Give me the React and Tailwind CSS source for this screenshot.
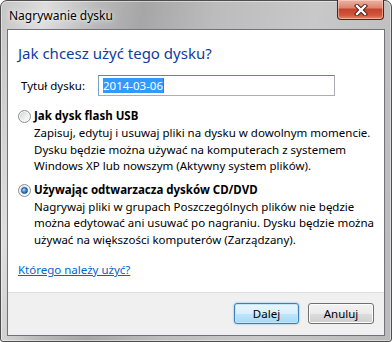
import React from 'react'

const ui = "font-['Segoe_UI','Noto_Sans',sans-serif]"

function Radio({ checked }) {
  return (
    <span className="flex h-[13px] w-[13px] shrink-0 items-center justify-center rounded-full border border-[#8c8e91] bg-[linear-gradient(135deg,#cfd0d2,#f4f4f4_70%,#ffffff)] shadow-[inset_0_0_0_1px_#f8f8f8]">
      {checked && (
        <span className="h-[7px] w-[7px] rounded-full border border-[#1d4a86] bg-[radial-gradient(circle_at_35%_35%,#b7e2ff,#3e8ee0_45%,#144c9b)]" />
      )}
    </span>
  )
}

function Option({ checked, title, lines }) {
  return (
    <div className="flex items-start gap-[3px]">
      <div className="pt-[2px]">
        <Radio checked={checked} />
      </div>
      <div className="text-[11.5px] leading-[16.5px] text-black">
        <div className="mb-[0.5px] font-bold">{title}</div>
        {lines.map((l) => (
          <div key={l} className="whitespace-nowrap">{l}</div>
        ))}
      </div>
    </div>
  )
}

function Button({ children, primary }) {
  return (
    <button
      className={`h-[21px] rounded-[3px] border text-[11.5px] leading-none text-black ${
        primary
          ? 'w-[65px] border-[#3c7fb1] bg-[linear-gradient(#eaf6fd,#d9f0fc_50%,#bee6fd_51%,#a7d9f5)] shadow-[inset_0_0_0_1px_#c0e7fb,0_0_2px_#5fb3ea]'
          : 'w-[66px] border-[#707070] bg-[linear-gradient(#f2f2f2,#ebebeb_50%,#dddddd_51%,#cfcfcf)] shadow-[inset_0_0_0_1px_#fcfcfc]'
      }`}
    >
      {children}
    </button>
  )
}

export default function App() {
  return (
    <div className={`h-[342px] w-[392px] bg-white ${ui}`}>
      <div className="relative flex h-[342px] w-[392px] flex-col rounded-t-[7px] rounded-b-[3px] border border-[#4e4e4e] bg-[linear-gradient(100deg,#c4c4c4_0%,#dedede_10%,#b8b8b8_22%,#a6a6a6_32%,#bcbcbc_48%,#c8c8c8_70%,#bababa_100%)] shadow-[inset_0_0_0_1px_rgba(255,255,255,0.45)]">
        <div className="flex h-[28px] items-center pl-[8px] pt-[1px]">
          <span className="text-[12px] text-black [text-shadow:0_0_8px_rgba(255,255,255,0.95),0_0_3px_rgba(255,255,255,0.9)]">
            Nagrywanie dysku
          </span>
        </div>

        <div className="mx-[6px] flex flex-col border border-[#6f7276]">
          <div className="flex h-[262px] flex-col bg-white pl-[10px] pt-[13px]">
            <div className="text-[15px] leading-[20px] text-[#0f3d9e]">Jak chcesz użyć tego dysku?</div>

            <div className="mt-[12px] flex items-center">
              <span className="ml-[3px] w-[77px] text-[11.5px] text-black">Tytuł dysku:</span>
              <div className="flex h-[21px] w-[237px] items-center border border-[#abadb3] border-t-[#5a86b3] border-l-[#7da2c8] bg-white pl-[4px]">
                <span className="bg-[#3399ff] text-[11.5px] leading-[15px] text-white">2014-03-06</span>
                <span className="h-[15px] w-[1px] bg-[#c05a00]" />
              </div>
            </div>

            <div className="mt-[12px]">
              <Option
                title="Jak dysk flash USB"
                lines={[
                  'Zapisuj, edytuj i usuwaj pliki na dysku w dowolnym momencie.',
                  'Dysku będzie można używać na komputerach z systemem',
                  'Windows XP lub nowszym (Aktywny system plików).',
                ]}
              />
            </div>

            <div className="mt-[7px]">
              <Option
                checked
                title="Używając odtwarzacza dysków CD/DVD"
                lines={[
                  'Nagrywaj pliki w grupach Poszczególnych plików nie będzie',
                  'można edytować ani usuwać po nagraniu. Dysku będzie można',
                  'używać na większości komputerów (Zarządzany).',
                ]}
              />
            </div>

            <a href="#" className="mt-[14px] w-fit text-[11.5px] leading-[16px] text-[#0066cc] underline">
              Którego należy użyć?
            </a>
          </div>
          <div className="h-[1px] bg-[#dfdfdf]" />
          <div className="flex h-[42px] justify-end gap-[9px] bg-[#f0f0f0] pr-[10px] pt-[10px]">
            <Button primary>Dalej</Button>
            <Button>Anuluj</Button>
          </div>
        </div>

        <div className="absolute right-[7px] top-[-1px] flex h-[20px] w-[47px] items-center justify-center rounded-b-[4px] border border-t-0 border-[#5b1d16] bg-[linear-gradient(#edb3a4,#dc8670_40%,#c5442c_50%,#d2553c_80%,#e58a6c)] shadow-[inset_0_0_0_1px_rgba(255,220,210,0.5)]">
          <svg width="14" height="12" viewBox="0 0 14 12">
            <path d="M3 2 L11 10 M11 2 L3 10" stroke="#4a1710" strokeWidth="4.2" strokeLinecap="square" />
            <path d="M3 2 L11 10 M11 2 L3 10" stroke="#ffffff" strokeWidth="2.4" strokeLinecap="square" />
          </svg>
        </div>
      </div>
    </div>
  )
}
